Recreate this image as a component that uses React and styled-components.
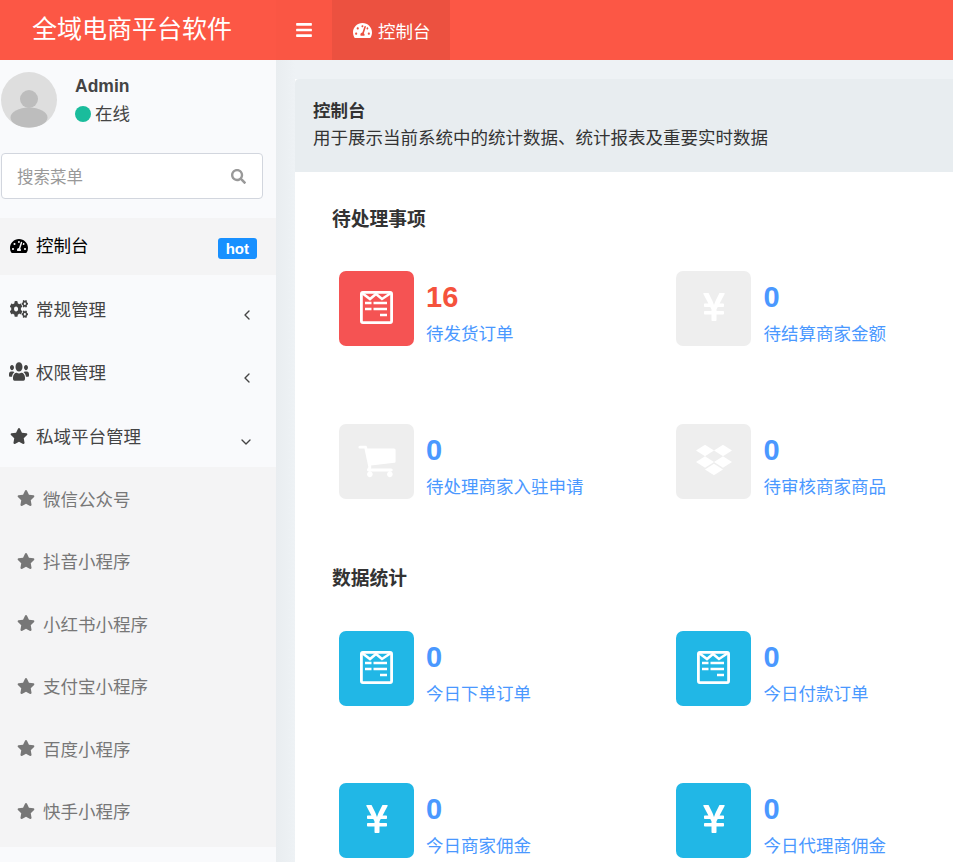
import React from 'react';
import styled, { createGlobalStyle } from 'styled-components';
import { FaBars, FaCogs, FaDropbox, FaSearch, FaStar, FaTachometerAlt, FaUsers, FaYenSign } from 'react-icons/fa';
import { LuChevronDown, LuChevronLeft } from 'react-icons/lu';

const GlobalStyle = createGlobalStyle`
  html, body {
    margin: 0;
    height: 100%;
    overflow: hidden;
  }
  body {
    font-family: "Liberation Sans", "Noto Sans CJK SC", sans-serif;
    font-size: 17.5px;
    color: #333;
    background: #eef2f5;
  }
`;

const Page = styled.div`
  height: 862px;
  display: flex;
  flex-direction: column;
  overflow: hidden;
`;

const Header = styled.header`
  flex: none;
  height: 60px;
  display: flex;
  align-items: stretch;
  background: #fc5745;
  color: #fff;
`;

const Logo = styled.div`
  width: 276px;
  box-sizing: border-box;
  padding-left: 32px;
  font-size: 25px;
  line-height: 58px;
`;

const Toggle = styled.div`
  width: 56px;
  display: flex;
  align-items: center;
  justify-content: center;
  background: #fa5644;
`;

const TopTab = styled.div`
  width: 118px;
  box-sizing: border-box;
  padding-left: 21px;
  display: flex;
  align-items: center;
  gap: 6px;
  background: #ec5140;
`;

const Body = styled.div`
  flex: 1;
  display: flex;
  min-height: 0;
`;

const Sidebar = styled.aside`
  flex: none;
  width: 276px;
  box-sizing: border-box;
  padding-top: 12px;
  background: #f9fafc;
`;

const UserPanel = styled.div`
  display: flex;
  padding-left: 1px;
  gap: 18px;
`;

const UserInfo = styled.div`
  display: flex;
  flex-direction: column;
`;

const UserName = styled.div`
  font-weight: bold;
  color: #444;
  line-height: 28px;
`;

const UserStatus = styled.div`
  display: flex;
  align-items: center;
  gap: 4px;
  color: #444;
  line-height: 28px;
`;

const StatusDot = styled.span`
  width: 16px;
  height: 16px;
  border-radius: 50%;
  background: #1abc9c;
`;

const SearchBox = styled.div`
  width: 262px;
  height: 46px;
  margin: 25px 0 19px 1px;
  box-sizing: border-box;
  padding: 0 16px 0 15px;
  display: flex;
  align-items: center;
  justify-content: space-between;
  background: #fff;
  border: 1px solid #d2d6de;
  border-radius: 4px;
  color: #999;
  font-size: 16.5px;
`;

const MenuRow = styled.div`
  height: ${(p) => (p.$active ? '57px' : '63px')};
  margin-bottom: ${(p) => (p.$active ? '3px' : '0')};
  box-sizing: border-box;
  padding: ${(p) => (p.$open ? '2px' : '0')} 19px 0 10px;
  display: flex;
  align-items: center;
  gap: 8px;
  background: ${(p) => (p.$active ? '#f4f4f5' : 'transparent')};
  color: ${(p) => (p.$active ? '#000' : '#444')};
`;

const MenuIcon = styled.span`
  width: 18px;
  display: flex;
  justify-content: center;
  margin-bottom: ${(p) => (p.$sub ? '0' : '2px')};
`;

const MenuText = styled.span`
  flex: 1;
  margin-bottom: ${(p) => (p.$active ? '4px' : '2px')};
`;

const Arrow = styled.span`
  display: flex;
  margin-top: 10px;
  margin-right: ${(p) => (p.$open ? '3px' : '2px')};
  color: #444;
`;

const HotBadge = styled.span`
  margin-top: 4px;
  padding: 0 8px;
  line-height: 21px;
  border-radius: 3px;
  background: #1890ff;
  color: #fff;
  font-size: 15px;
  font-weight: bold;
`;

const SubMenu = styled.div`
  padding: 0 0 5px;
  background: #f4f4f5;
`;

const SubRow = styled.div`
  height: 62.5px;
  padding-left: 17px;
  display: flex;
  align-items: center;
  gap: 8px;
  color: #777;
`;

const Main = styled.main`
  flex: 1;
  min-width: 0;
  padding: 19px 0 0 19px;
  overflow: hidden;
  background: linear-gradient(90deg, #e9edf0, #eef2f5 19px);
`;

const Panel = styled.div`
  min-height: 100%;
  background: #fff;
`;

const PanelHead = styled.div`
  padding: 18px 18px 21px;
  background: #e8edf0;
  border-top-left-radius: 4px;
`;

const PanelTitle = styled.div`
  font-weight: bold;
  line-height: 28px;
`;

const PanelDesc = styled.div`
  line-height: 26px;
`;

const PanelBody = styled.div`
  padding: 34px 0 0 37px;
`;

const SectionTitle = styled.h3`
  margin: 0;
  font-size: 18.75px;
  font-weight: bold;
  line-height: 28px;
`;

const StatGrid = styled.div`
  display: grid;
  grid-template-columns: 337.4px 260px;
  row-gap: ${(p) => p.$rowGap}px;
  margin: ${(p) => p.$top}px 0 ${(p) => p.$bottom}px 7px;
`;

const Stat = styled.div`
  height: 75px;
  display: flex;
  gap: 12px;
`;

const Tile = styled.div`
  flex: none;
  width: 75px;
  height: 75px;
  padding-bottom: 3px;
  box-sizing: border-box;
  display: flex;
  align-items: center;
  justify-content: center;
  border-radius: 7px;
  color: #fff;
  background: ${(p) => p.$bg};
`;

const StatText = styled.div`
  padding-top: 8px;
  white-space: nowrap;
`;

const StatValue = styled.div`
  font-size: 29px;
  font-weight: bold;
  line-height: 36px;
  color: ${(p) => p.$color || '#4a98ff'};
`;

const StatLabel = styled.div`
  margin-top: 6px;
  line-height: 26px;
  color: #4a98ff;
`;

const RED = '#f55353';
const GREY = '#eeeeee';
const BLUE = '#21b7e6';

const ReceiptIcon = () => (
  <svg width="33" height="33" viewBox="0 0 33 33" fill="none" stroke="#fff">
    <rect x="1.400" y="1.400" width="30.200" height="30.200" rx="1.500" strokeWidth="2.800" />
    <path d="M2 2l8 6 6-5 6 5 9-6" strokeWidth="2.600" />
    <path d="M5 12h6.500M13.500 12H27M5 18h6.500M13.500 18H27M20 24h7" strokeWidth="2.400" />
  </svg>
);

const CartIcon = () => (
  <svg width="40" height="40" viewBox="0 0 1792 1792" fill="#fff">
    <path d="M704 1536q0 52-38 90t-90 38-90-38-38-90 38-90 90-38 90 38 38 90zm896 0q0 52-38 90t-90 38-90-38-38-90 38-90 90-38 90 38 38 90zm128-1088v512q0 24-16.500 42.500t-40.500 21.500l-1044 122q13 60 13 70 0 16-24 64h920q26 0 45 19t19 45-19 45-45 19h-1024q-26 0-45-19t-19-45q0-11 8-31.500t16-36 21.500-40 15.500-29.500l-177-823h-204q-26 0-45-19t-19-45 19-45 45-19h256q16 0 28.500 6.500t19.500 15.500 13 24.500 8 26 5.500 29.500 4.500 26h1201q26 0 45 19t19 45z" />
  </svg>
);

const Avatar = () => (
  <svg width="56" height="56" viewBox="0 0 56 56">
    <circle cx="28" cy="28" r="28" fill="#dedede" />
    <circle cx="28" cy="27" r="9" fill="#bdbdbd" />
    <ellipse cx="28" cy="45.500" rx="18.500" ry="10" fill="#bdbdbd" />
  </svg>
);

// the reference's cogs and users glyphs are taller than the FA5 ones
const TallCogs = styled(FaCogs).attrs({ preserveAspectRatio: 'none' })`
  width: 19px;
  height: 18px;
`;

const TallUsers = styled(FaUsers).attrs({ preserveAspectRatio: 'none' })`
  flex: none;
  width: 20px;
  height: 21px;
`;

const mainMenu = [
  { text: '常规管理', icon: <TallCogs />, open: false },
  { text: '权限管理', icon: <TallUsers />, open: false },
  { text: '私域平台管理', icon: <FaStar size={18} />, open: true },
];

const subMenu = ['微信公众号', '抖音小程序', '小红书小程序', '支付宝小程序', '百度小程序', '快手小程序'];

const yen = <FaYenSign size={32} />;
const receipt = <ReceiptIcon />;

const pending = [
  { value: '16', label: '待发货订单', icon: receipt, bg: RED, color: '#f5523c' },
  { value: '0', label: '待结算商家金额', icon: yen, bg: GREY },
  { value: '0', label: '待处理商家入驻申请', icon: <CartIcon />, bg: GREY },
  { value: '0', label: '待审核商家商品', icon: <FaDropbox size={36} />, bg: GREY },
];

const stats = [
  { value: '0', label: '今日下单订单', icon: receipt, bg: BLUE },
  { value: '0', label: '今日付款订单', icon: receipt, bg: BLUE },
  { value: '0', label: '今日商家佣金', icon: yen, bg: BLUE },
  { value: '0', label: '今日代理商佣金', icon: yen, bg: BLUE },
];

function StatItem({ item }) {
  return (
    <Stat>
      <Tile $bg={item.bg}>{item.icon}</Tile>
      <StatText>
        <StatValue $color={item.color}>{item.value}</StatValue>
        <StatLabel>{item.label}</StatLabel>
      </StatText>
    </Stat>
  );
}

export default function App() {
  return (
    <Page>
      <GlobalStyle />
      <Header>
        <Logo>全域电商平台软件</Logo>
        <Toggle>
          <FaBars size={18} />
        </Toggle>
        <TopTab>
          <FaTachometerAlt size={19} />
          控制台
        </TopTab>
      </Header>
      <Body>
        <Sidebar>
          <UserPanel>
            <Avatar />
            <UserInfo>
              <UserName>Admin</UserName>
              <UserStatus>
                <StatusDot />
                在线
              </UserStatus>
            </UserInfo>
          </UserPanel>
          <SearchBox>
            搜索菜单
            <FaSearch size={15} />
          </SearchBox>
          <MenuRow $active>
            <MenuIcon>
              <FaTachometerAlt size={18} />
            </MenuIcon>
            <MenuText $active>控制台</MenuText>
            <HotBadge>hot</HotBadge>
          </MenuRow>
          {mainMenu.map((m) => (
            <MenuRow key={m.text} $open={m.open}>
              <MenuIcon>{m.icon}</MenuIcon>
              <MenuText>{m.text}</MenuText>
              <Arrow $open={m.open}>{m.open ? <LuChevronDown size={16} /> : <LuChevronLeft size={16} />}</Arrow>
            </MenuRow>
          ))}
          <SubMenu>
            {subMenu.map((s) => (
              <SubRow key={s}>
                <MenuIcon $sub>
                  <FaStar size={18} />
                </MenuIcon>
                {s}
              </SubRow>
            ))}
          </SubMenu>
        </Sidebar>
        <Main>
          <Panel>
            <PanelHead>
              <PanelTitle>控制台</PanelTitle>
              <PanelDesc>用于展示当前系统中的统计数据、统计报表及重要实时数据</PanelDesc>
            </PanelHead>
            <PanelBody>
              <SectionTitle>待处理事项</SectionTitle>
              <StatGrid $top={37} $bottom={66} $rowGap={78}>
                {pending.map((item) => (
                  <StatItem key={item.label} item={item} />
                ))}
              </StatGrid>
              <SectionTitle>数据统计</SectionTitle>
              <StatGrid $top={38} $bottom={0} $rowGap={77}>
                {stats.map((item) => (
                  <StatItem key={item.label} item={item} />
                ))}
              </StatGrid>
            </PanelBody>
          </Panel>
        </Main>
      </Body>
    </Page>
  );
}
